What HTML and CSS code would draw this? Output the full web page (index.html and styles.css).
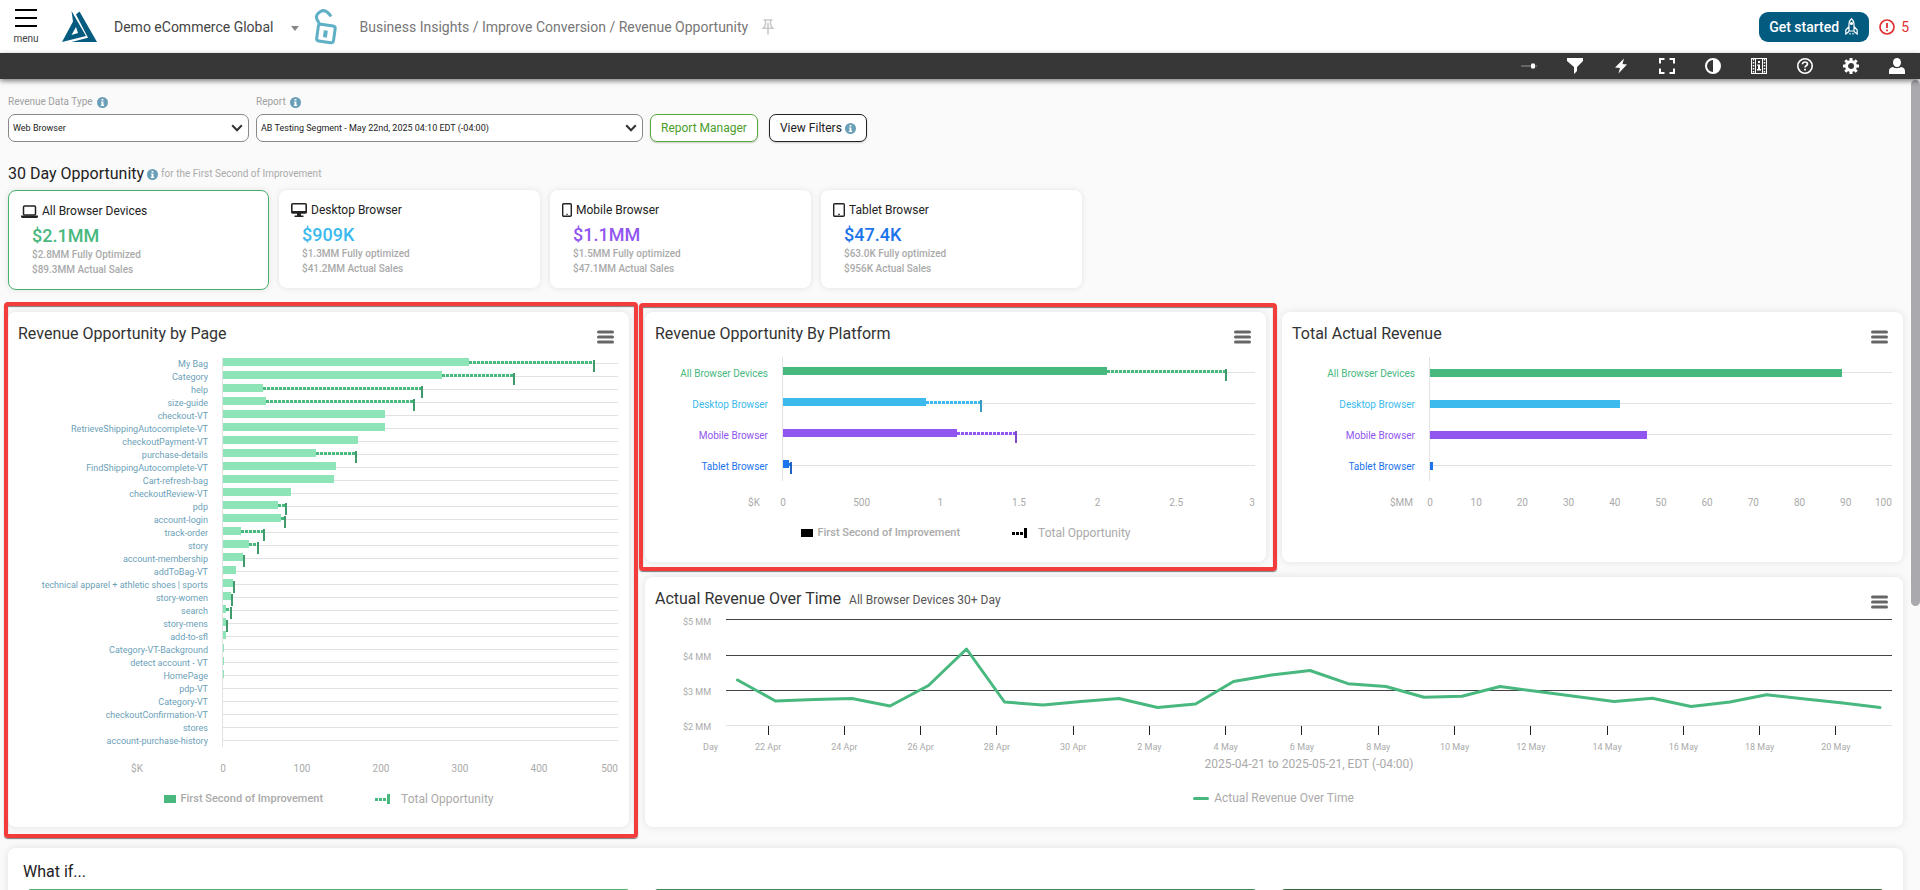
FILE: index.html
```html
<!DOCTYPE html>
<html lang="en">
<head>
  <meta charset="UTF-8">
  <meta name="viewport" content="width=device-width, initial-scale=1.0">
  <title>Revenue Opportunity</title>
  <link rel="stylesheet" href="styles.css">
</head>
<body>
  <!-- shared icons -->
  <svg class="sprite" aria-hidden="true">
    <symbol id="info" viewBox="0 0 12 12">
      <circle cx="6" cy="6" r="6" fill="#6a9fb8"/>
      <path d="M5 2.2h2v1.7H5zM4.3 4.9H7v3.6h.8v1.2H4.2V8.5H5V6.1h-.7z" fill="#fff"/>
    </symbol>
    <symbol id="chevron" viewBox="0 0 12 8">
      <path d="M1.2 1.2 6 6.2l4.8-5" fill="none" stroke="#333" stroke-width="2"/>
    </symbol>
    <symbol id="burger" viewBox="0 0 17 14">
      <path d="M1.5 2h14M1.5 7h14M1.5 12h14" stroke="#666" stroke-width="3" stroke-linecap="round"/>
    </symbol>
    <symbol id="whisker" viewBox="0 0 15 10">
      <path d="M0 4h3v3H0zM4 4h3v3H4zM8 4h3v3H8zM12 0h3v10h-3z" fill="currentColor"/>
    </symbol>
  </svg>

  <header class="topbar">
    <button class="menu-btn" type="button">
      <svg width="22" height="18" viewBox="0 0 22 18"><path d="M0 1h22M0 9h22M0 17h22" stroke="#000" stroke-width="2"/></svg>
      <span>menu</span>
    </button>
    <a class="logo" href="#" aria-label="Home">
      <svg width="35" height="32" viewBox="0 0 35 32">
        <path d="M17.500 .5 35 31H9.500L26 26.700 14 3.500z" fill="#045b80"/>
        <path d="M9.500 0 24 25 0 31 11 10.500zM14 16 9.500 24l6.500-2z" fill="#045b80" fill-rule="evenodd"/>
      </svg>
    </a>
    <button class="account" type="button">Demo eCommerce Global <span class="caret"></span></button>
    <svg class="lock" width="24" height="38" viewBox="0 0 24 38" fill="none" stroke="#5fb0c6" stroke-width="3">
      <rect x="3.500" y="17" width="17" height="17" rx="2.500" transform="rotate(8 12 25)"/>
      <path d="M6 17 2.800 11C1.500 7.500 4 5 6.500 3.500c3.500-2 7-.5 10.500 5"/>
      <rect x="10.500" y="23.500" width="2" height="5" stroke-width="2" transform="rotate(8 12 25)"/>
    </svg>
    <nav class="crumbs">Business Insights / Improve Conversion / Revenue Opportunity</nav>
    <svg class="pin" width="12" height="16" viewBox="0 0 12 16" fill="none" stroke="#c8c8c8" stroke-width="1.500"><path d="M1.500 1h9M3.500 1v5L1 9.300h10L8.500 6V1M6 4v11.500"/></svg>
    <div class="topbar-right">
      <button class="start-btn" type="button">Get started
        <svg width="13" height="17" viewBox="0 0 13 17" fill="none" stroke="#fff" stroke-width="1.200"><path d="M4 13V6c0-2.500 1-4 2.500-5.200C8 2 9 3.500 9 6v7zM4 8.500.8 12v4L4 13.500M9 8.500l3.200 3.500v4L9 13.500"/><circle cx="6.500" cy="5.500" r="1" fill="#fff"/><path d="M5 15v1.500M8 15v1.500"/></svg>
      </button>
      <button class="alert-btn" type="button">
        <svg width="16" height="16" viewBox="0 0 16 16"><circle cx="8" cy="8" r="7" fill="none" stroke="#e03131" stroke-width="1.700"/><path d="M8 4v5M8 10.500v1.800" stroke="#e03131" stroke-width="1.800"/></svg>
        5
      </button>
    </div>
  </header>

  <nav class="toolbar">
    <button type="button" aria-label="Slider"><svg viewBox="0 0 16 16"><path d="M0 8h16" stroke="#777" stroke-width="1.500"/><rect x="10" y="5.500" width="4" height="5" rx="1" fill="#fff"/></svg></button>
    <button type="button" aria-label="Filter"><svg viewBox="0 0 16 16"><path d="M0 0h16v3l-6 6v4l-3 3V9L0 3z" fill="#fff"/></svg></button>
    <button type="button" aria-label="Events"><svg viewBox="0 0 16 16"><path d="M11 .5 2 9.500l5 .5-1.500 5.500L14 6.500 9.500 6z" fill="#fff"/></svg></button>
    <button type="button" aria-label="Full screen"><svg viewBox="0 0 16 16"><path d="M1 5.500V1h4.500M10.500 1H15v4.500M15 10.500V15h-4.500M5.500 15H1v-4.500" fill="none" stroke="#fff" stroke-width="2"/></svg></button>
    <button type="button" aria-label="Contrast"><svg viewBox="0 0 16 16"><circle cx="8" cy="8" r="7" fill="none" stroke="#fff" stroke-width="2"/><path d="M8 1a7 7 0 0 1 0 14z" fill="#fff"/></svg></button>
    <button type="button" aria-label="Film"><svg viewBox="0 0 16 16"><rect x=".5" y=".5" width="15" height="15" fill="none" stroke="#fff"/><path d="M2.500 1v14M13.500 1v14" stroke="#fff" stroke-width="1.500" stroke-dasharray="1.500 1.500"/><path d="M4.500 0v16M11.500 0v16" stroke="#fff"/><path d="M7 3h2v2H7zM6.300 6.500H9V11h1v1.500H6V11h1V8h-.7z" fill="#fff"/></svg></button>
    <button type="button" aria-label="Help"><svg viewBox="0 0 16 16" fill="none" stroke="#fff"><circle cx="8" cy="8" r="7.200" stroke-width="1.600"/><path d="M5.500 6.300C5.500 4.800 6.600 4 8 4s2.500.8 2.500 2.100C10.500 7.800 8 7.800 8 9.500M8 10.800v1.700" stroke-width="1.700"/></svg></button>
    <button type="button" aria-label="Settings"><svg viewBox="0 0 16 16" fill="none" stroke="#fff"><circle cx="8" cy="8" r="4.500" stroke-width="3"/><path d="M8 0v3M8 13v3M0 8h3M13 8h3M2.300 2.300l2 2M11.700 11.700l2 2M13.700 2.300l-2 2M4.300 11.700l-2 2" stroke-width="3"/></svg></button>
    <button type="button" aria-label="Profile"><svg viewBox="0 0 16 16" fill="#fff"><ellipse cx="8" cy="4.500" rx="4" ry="4.500"/><path d="M0 16v-3c0-2.500 1.500-3.500 4-4 2 1.600 6 1.600 8 0 2.500.5 4 1.500 4 4v3z"/></svg></button>
  </nav>

  <main class="page">
    <div class="scroll-thumb"></div>

    <section class="filters">
      <div class="field field-type">
        <label for="data-type">Revenue Data Type <svg class="info"><use href="#info"/></svg></label>
        <div class="select-wrap">
          <select id="data-type"><option>Web Browser</option></select>
          <svg class="chevron"><use href="#chevron"/></svg>
        </div>
      </div>
      <div class="field field-report">
        <label for="report">Report <svg class="info"><use href="#info"/></svg></label>
        <div class="select-wrap">
          <select id="report"><option>AB Testing Segment - May 22nd, 2025 04:10 EDT (-04:00)</option></select>
          <svg class="chevron"><use href="#chevron"/></svg>
        </div>
      </div>
      <button class="btn btn-green" type="button">Report Manager</button>
      <button class="btn" type="button">View Filters <svg class="info"><use href="#info"/></svg></button>
    </section>

    <h2 class="section-title">30 Day Opportunity <svg class="info"><use href="#info"/></svg> <small>for the First Second of Improvement</small></h2>

    <section class="devices">
      <article class="device selected">
        <h3><svg width="17" height="13" viewBox="0 0 17 13"><rect x="2.500" y="1" width="12" height="9" rx="1" fill="none" stroke="#222" stroke-width="1.500"/><path d="M0 10.500h17v1.500l-1 1H1l-1-1z" fill="#222"/></svg>All Browser Devices</h3>
        <p class="amount green">$2.1MM</p>
        <p>$2.8MM Fully Optimized</p>
        <p>$89.3MM Actual Sales</p>
      </article>
      <article class="device">
        <h3><svg width="16" height="14" viewBox="0 0 16 14"><rect x=".8" y=".8" width="14.400" height="9" rx="1" fill="none" stroke="#222" stroke-width="1.600"/><path d="M.5 8h15v2.500H.5zM6 10h4v2.500h2.500V14h-9v-1.500H6z" fill="#222"/></svg>Desktop Browser</h3>
        <p class="amount blue">$909K</p>
        <p>$1.3MM Fully optimized</p>
        <p>$41.2MM Actual Sales</p>
      </article>
      <article class="device">
        <h3><svg width="10" height="14" viewBox="0 0 10 14"><rect x=".7" y=".7" width="8.600" height="12.600" rx="1" fill="none" stroke="#222" stroke-width="1.400"/><path d="M4.200 11.300h1.600" stroke="#222"/></svg>Mobile Browser</h3>
        <p class="amount purple">$1.1MM</p>
        <p>$1.5MM Fully optimized</p>
        <p>$47.1MM Actual Sales</p>
      </article>
      <article class="device">
        <h3><svg width="12" height="14" viewBox="0 0 12 14"><rect x=".7" y=".7" width="10.600" height="12.600" rx="1" fill="none" stroke="#222" stroke-width="1.400"/><path d="M5 11.300h2" stroke="#222"/></svg>Tablet Browser</h3>
        <p class="amount royal">$47.4K</p>
        <p>$63.0K Fully optimized</p>
        <p>$956K Actual Sales</p>
      </article>
    </section>

    <section class="charts">
      <article class="card by-page outlined">
        <div class="card-head"><h2>Revenue Opportunity by Page</h2><button type="button" aria-label="Chart menu"><svg><use href="#burger"/></svg></button></div>
        <div class="rows rows-page">
          <div class="row"><span>My Bag</span><i class="bar" style="width:62.4%"></i><i class="dots" style="width:31.6%"></i></div>
          <div class="row"><span>Category</span><i class="bar" style="width:55.5%"></i><i class="dots" style="width:18.2%"></i></div>
          <div class="row"><span>help</span><i class="bar" style="width:10%"></i><i class="dots" style="width:40.4%"></i></div>
          <div class="row"><span>size-guide</span><i class="bar" style="width:11%"></i><i class="dots" style="width:37.4%"></i></div>
          <div class="row"><span>checkout-VT</span><i class="bar" style="width:41.1%"></i></div>
          <div class="row"><span>RetrieveShippingAutocomplete-VT</span><i class="bar" style="width:40.9%"></i></div>
          <div class="row"><span>checkoutPayment-VT</span><i class="bar" style="width:34.1%"></i></div>
          <div class="row"><span>purchase-details</span><i class="bar" style="width:23.6%"></i><i class="dots" style="width:10%"></i></div>
          <div class="row"><span>FindShippingAutocomplete-VT</span><i class="bar" style="width:28.5%"></i></div>
          <div class="row"><span>Cart-refresh-bag</span><i class="bar" style="width:28%"></i></div>
          <div class="row"><span>checkoutReview-VT</span><i class="bar" style="width:17.3%"></i></div>
          <div class="row"><span>pdp</span><i class="bar" style="width:14%"></i><i class="dots" style="width:2%"></i></div>
          <div class="row"><span>account-login</span><i class="bar" style="width:14.8%"></i><i class="dots" style="width:0.9%"></i></div>
          <div class="row"><span>track-order</span><i class="bar" style="width:4.6%"></i><i class="dots" style="width:5.7%"></i></div>
          <div class="row"><span>story</span><i class="bar" style="width:6.7%"></i><i class="dots" style="width:2.2%"></i></div>
          <div class="row"><span>account-membership</span><i class="bar" style="width:5%"></i><i class="dots" style="width:0.4%"></i></div>
          <div class="row"><span>addToBag-VT</span><i class="bar" style="width:3.4%"></i></div>
          <div class="row"><span>technical apparel + athletic shoes | sports</span><i class="bar" style="width:2.6%"></i><i class="dots" style="width:0.3%"></i></div>
          <div class="row"><span>story-women</span><i class="bar" style="width:1.9%"></i><i class="dots" style="width:0.4%"></i></div>
          <div class="row"><span>search</span><i class="bar" style="width:0.8%"></i><i class="dots" style="width:1.3%"></i></div>
          <div class="row"><span>story-mens</span><i class="bar" style="width:0.8%"></i><i class="dots" style="width:0.3%"></i></div>
          <div class="row"><span>add-to-sfl</span><i class="bar" style="width:0.8%"></i></div>
          <div class="row"><span>Category-VT-Background</span><i class="bar" style="width:0.3%"></i></div>
          <div class="row"><span>detect account - VT</span><i class="bar" style="width:0.3%"></i></div>
          <div class="row"><span>HomePage</span><i class="bar" style="width:0.3%"></i></div>
          <div class="row"><span>pdp-VT</span></div>
          <div class="row"><span>Category-VT</span></div>
          <div class="row"><span>checkoutConfirmation-VT</span></div>
          <div class="row"><span>stores</span></div>
          <div class="row"><span>account-purchase-history</span></div>
        </div>
        <div class="axis"><b>$K</b><span>0</span><span>100</span><span>200</span><span>300</span><span>400</span><span>500</span></div>
        <div class="legend legend-green">
          <span class="first"><i></i>First Second of Improvement</span>
          <span><svg><use href="#whisker"/></svg>Total Opportunity</span>
        </div>
      </article>

      <article class="card by-platform outlined">
        <div class="card-head"><h2>Revenue Opportunity By Platform</h2><button type="button" aria-label="Chart menu"><svg><use href="#burger"/></svg></button></div>
        <div class="rows">
          <div class="row green"><span>All Browser Devices</span><i class="bar" style="width:68.7%"></i><i class="dots" style="width:25.2%"></i></div>
          <div class="row blue"><span>Desktop Browser</span><i class="bar" style="width:30.2%"></i><i class="dots" style="width:11.7%"></i></div>
          <div class="row purple"><span>Mobile Browser</span><i class="bar" style="width:36.9%"></i><i class="dots" style="width:12.5%"></i></div>
          <div class="row royal"><span>Tablet Browser</span><i class="bar" style="width:1.3%"></i><i class="dots" style="width:0.4%"></i></div>
        </div>
        <div class="axis"><b>$K</b><span>0</span><span>500</span><span>1</span><span>1.5</span><span>2</span><span>2.5</span><span>3</span></div>
        <div class="legend">
          <span class="first"><i></i>First Second of Improvement</span>
          <span><svg><use href="#whisker"/></svg>Total Opportunity</span>
        </div>
      </article>

      <article class="card total">
        <div class="card-head"><h2>Total Actual Revenue</h2><button type="button" aria-label="Chart menu"><svg><use href="#burger"/></svg></button></div>
        <div class="rows">
          <div class="row green"><span>All Browser Devices</span><i class="bar" style="width:89.2%"></i></div>
          <div class="row blue"><span>Desktop Browser</span><i class="bar" style="width:41.2%"></i></div>
          <div class="row purple"><span>Mobile Browser</span><i class="bar" style="width:47%"></i></div>
          <div class="row royal"><span>Tablet Browser</span><i class="bar" style="width:0.7%"></i></div>
        </div>
        <div class="axis"><b>$MM</b><span>0</span><span>10</span><span>20</span><span>30</span><span>40</span><span>50</span><span>60</span><span>70</span><span>80</span><span>90</span><span>100</span></div>
      </article>

      <article class="card over-time">
        <div class="card-head"><h2>Actual Revenue Over Time <small>All Browser Devices 30+ Day</small></h2><button type="button" aria-label="Chart menu"><svg><use href="#burger"/></svg></button></div>
        <div class="line-chart">
          <div class="y-axis"><span>$5 MM</span><span>$4 MM</span><span>$3 MM</span><span>$2 MM</span></div>
          <svg class="plot" viewBox="0 0 1166 108" preserveAspectRatio="none" fill="none">
            <path d="M0 1.500h1166M0 37.500h1166M0 72.500h1166" stroke="#444"/>
            <path d="M0 107.500h1166" stroke="#e2e2e2"/>
            <polyline points="11.500,62 49.500,83 88,81.500 126,80.500 164,88 202.500,67.500 240.500,31 278.500,84 317,87 355,83.500 393,80.500 431.500,89.500 469.500,86 507.500,63.500 545.500,57 584,52.500 622,65.700 660,68.500 698,79.300 736,78.300 774,68.500 812,73.500 850,78.500 888,83.500 926.500,80.300 965,88.500 1004,84 1040.500,76.700 1079,81 1117,85 1154,89.500" stroke="#48b87e" stroke-width="3" stroke-linejoin="round" stroke-linecap="round"/>
          </svg>
          <span class="day">Day</span>
          <div class="x-axis"><span>22 Apr</span><span>24 Apr</span><span>26 Apr</span><span>28 Apr</span><span>30 Apr</span><span>2 May</span><span>4 May</span><span>6 May</span><span>8 May</span><span>10 May</span><span>12 May</span><span>14 May</span><span>16 May</span><span>18 May</span><span>20 May</span></div>
          <p class="range">2025-04-21 to 2025-05-21, EDT (-04:00)</p>
          <p class="line-legend"><i></i>Actual Revenue Over Time</p>
        </div>
      </article>
    </section>

    <section class="card what-if">
      <h2>What if...</h2>
      <div class="scenarios"><div></div><div></div><div></div></div>
    </section>
  </main>
</body>
</html>
```
FILE: styles.css
```css
* {
  box-sizing: border-box;
}
body {
  margin: 0;
  height: 100vh;
  display: flex;
  flex-direction: column;
  overflow: hidden;
  font-family: Roboto, "Liberation Sans", sans-serif;
  background: #fafafa;
  color: #222;
}
h2, h3, p {
  margin: 0;
  font-weight: 400;
}
button {
  font-family: inherit;
  background: none;
  border: none;
  padding: 0;
  cursor: pointer;
}
.sprite {
  display: none;
}

/* top bar */
.topbar {
  display: flex;
  align-items: center;
  flex: none;
  height: 53px;
  padding: 0 11px 0 14px;
  background: #fff;
}
.menu-btn {
  display: flex;
  flex-direction: column;
  align-items: center;
  gap: 6px;
  width: 24px;
  font-size: 10px;
  line-height: 12px;
  color: #444;
}
.logo {
  display: flex;
  margin-left: 24px;
}
.account {
  display: flex;
  align-items: center;
  gap: 17px;
  margin-left: 17px;
  font-size: 14px;
  color: #444;
}
.caret {
  margin-top: 4px;
  border: 4px solid transparent;
  border-top: 5px solid #888;
  border-bottom: 0;
}
.lock {
  margin-left: 15px;
}
.crumbs {
  margin-left: 22px;
  font-size: 14px;
  color: #777;
}
.pin {
  margin-left: 14px;
}
.topbar-right {
  display: flex;
  gap: 10px;
  margin-left: auto;
}
.start-btn {
  display: flex;
  align-items: center;
  gap: 6px;
  height: 30px;
  padding: 0 11px 0 10px;
  border-radius: 9px;
  background: #045b80;
  color: #fff;
  font-size: 14px;
  font-weight: 500;
}
.alert-btn {
  display: flex;
  align-items: center;
  gap: 6px;
  font-size: 14px;
  color: #e03131;
}

/* dark toolbar */
.toolbar {
  display: flex;
  justify-content: flex-end;
  gap: 30px;
  flex: none;
  height: 26px;
  padding: 0 15px;
  background: #373737;
  box-shadow: 0 2px 5px rgba(0, 0, 0, 0.5);
  z-index: 1;
}
.toolbar svg {
  display: block;
  width: 16px;
  height: 16px;
}

.page {
  position: relative;
  flex: 1;
  overflow: hidden;
  padding: 16px 17px 0 8px;
}
.scroll-thumb {
  position: absolute;
  top: 1px;
  right: 0;
  width: 9px;
  height: 526px;
  border-radius: 5px;
  background: #a9a9ae;
}
.info {
  width: 11px;
  height: 11px;
}

/* filters */
.filters {
  display: flex;
  align-items: flex-end;
  gap: 7px;
}
.field-type {
  width: 241px;
}
.field-report {
  width: 387px;
}
.field label {
  display: flex;
  align-items: center;
  gap: 4px;
  margin-bottom: 5px;
  font-size: 10px;
  line-height: 14px;
  color: #a0a0a0;
}
.select-wrap {
  position: relative;
}
.select-wrap select {
  width: 100%;
  height: 28px;
  padding: 0 24px 0 4px;
  appearance: none;
  border: 1px solid #888;
  border-radius: 7px;
  background: #fff;
  color: #222;
  font: 400 9px Roboto, sans-serif;
}
.chevron {
  position: absolute;
  right: 6px;
  top: 10px;
  width: 12px;
  height: 8px;
  pointer-events: none;
}
.btn {
  display: flex;
  align-items: center;
  gap: 3px;
  height: 28px;
  padding: 0 10px;
  border: 1px solid #222;
  border-radius: 7px;
  background: #fff;
  box-shadow: 0 1px 2px rgba(0, 0, 0, 0.2);
  font-size: 12px;
  color: #222;
}
.btn-green {
  margin-right: 4px;
  border-color: #5aaa3a;
  color: #4b9c2d;
}

/* 30 day opportunity */
.section-title {
  display: flex;
  align-items: center;
  gap: 3px;
  margin-top: 21px;
  font-size: 16px;
  line-height: 22px;
}
.section-title small {
  font-size: 10px;
  color: #aaa;
}
.devices {
  display: flex;
  align-items: flex-start;
  gap: 10px;
  height: 127px;
  padding-top: 5px;
}
.device {
  width: 261px;
  padding: 12px;
  border-radius: 8px;
  background: #fff;
  box-shadow: 0 0 6px rgba(0, 0, 0, 0.1);
  height: 98px;
}
.device.selected {
  height: 100px;
  border: 1px solid #45b26b;
}
.device h3 {
  display: flex;
  align-items: center;
  gap: 4px;
  height: 16px;
  font-size: 12px;
}
.device p {
  margin-left: 11px;
  font-size: 10px;
  font-weight: 500;
  line-height: 15px;
  color: #aaa;
}
.device .amount {
  font-size: 18px;
  line-height: 22px;
  padding-top: 6px;
  color: var(--series);
}
.green { --series: #48b87e; }
.blue { --series: #3cbaed; }
.purple { --series: #9155f0; }
.royal { --series: #1c74ec; }

/* chart cards */
.card {
  position: relative;
  border-radius: 8px;
  background: #fff;
  box-shadow: 0 0 8px rgba(0, 0, 0, 0.1);
}
.charts {
  display: grid;
  grid-template-columns: repeat(3, minmax(0, 1fr));
  grid-template-rows: 250px 250px;
  gap: 15px 16px;
}
.by-page {
  grid-row: span 2;
}
.over-time {
  grid-column: span 2;
}
.outlined::after {
  content: "";
  position: absolute;
  inset: -9px -11px -9px -6px;
  border: 4px solid #f33c3c;
  border-radius: 4px;
  box-shadow: 0 1px 1px rgba(0, 0, 0, 0.5), inset 0 1px 1px rgba(0, 0, 0, 0.5);
  pointer-events: none;
}
.by-page.outlined::after {
  inset: -10px -9px -11px -4px;
}
.card-head {
  display: flex;
  justify-content: space-between;
  align-items: center;
  height: 45px;
  padding: 0 15px 0 10px;
}
.card-head h2 {
  padding-bottom: 3px;
  font-size: 16px;
  color: #333;
}
.card-head small {
  margin-left: 4px;
  font-size: 12px;
  color: #555;
}
.card-head svg {
  display: block;
  width: 17px;
  height: 14px;
  margin-top: 4px;
}
.rows {
  --row: 31px;
  --label: 10px;
  margin: 0 11px 0 137px;
  border-left: 1px solid #e2e2e2;
}
.total .rows {
  margin-left: 147px;
}
.rows-page {
  --row: 13px;
  --label: 9px;
  --series: #8de4b6;
  margin-left: 214px;
}
.row {
  position: relative;
  display: flex;
  align-items: center;
  height: var(--row);
  background: linear-gradient(#e2e2e2, #e2e2e2) center / 100% 1px no-repeat;
}
.row span {
  position: absolute;
  right: 100%;
  margin-right: 15px;
  padding-top: 2px;
  font-size: var(--label);
  line-height: 13px;
  white-space: nowrap;
  color: var(--series);
}
.rows-page .row span {
  color: #6c9fb8;
}
.bar {
  height: 8px;
  margin-bottom: 3px;
  background: var(--series);
}
.total .bar {
  margin-bottom: 0;
}
/* dotted extension with its end cap */
.dots {
  position: relative;
  height: 3px;
  margin-bottom: 3px;
  background: repeating-linear-gradient(90deg, var(--dot, var(--series)) 0 3px, transparent 3px 4px);
}
.rows-page .dots {
  --dot: #48b87e;
}
.dots::after {
  content: "";
  position: absolute;
  right: -1px;
  top: -1px;
  width: 2px;
  height: 12px;
  background: color-mix(in srgb, var(--dot, var(--series)) 80%, #222);
}
.axis {
  position: relative;
  display: flex;
  justify-content: space-between;
  margin: 14px 11px 0 138px;
  font-size: 10px;
  line-height: 16px;
  color: #aaa;
}
.axis b {
  position: absolute;
  right: 100%;
  margin-right: 23px;
  font-weight: 400;
}
.total .axis {
  margin-left: 148px;
}
.total .axis b {
  margin-right: 17px;
}
.by-page .axis {
  margin-left: 215px;
}
.by-page .axis b {
  margin-right: 80px;
}
.axis span {
  display: flex;
  justify-content: center;
  width: 0;
}
.axis span:last-child {
  justify-content: flex-end;
}
.legend {
  display: flex;
  justify-content: center;
  gap: 52px;
  margin-top: 14px;
  padding-left: 20px;
  font-size: 12px;
  line-height: 16px;
  color: #aaa;
}
.legend span {
  display: flex;
  align-items: center;
  gap: 11px;
}
.legend .first {
  gap: 5px;
  font-size: 11px;
  font-weight: 500;
}
.legend i {
  width: 12px;
  height: 8px;
  background: #000;
}
.legend svg {
  width: 15px;
  height: 10px;
  color: #000;
}
.legend-green i {
  background: #48b87e;
}
.legend-green svg {
  color: #48b87e;
}

/* line chart */
.line-chart {
  display: grid;
  grid-template-columns: 71px 1fr;
  margin: -4px 11px 0 0;
  padding-left: 10px;
  font-size: 9px;
  color: #aaa;
}
.y-axis {
  display: flex;
  flex-direction: column;
  justify-content: space-between;
  height: 117px;
  margin: -2px 15px -7px 0;
  line-height: 12px;
  text-align: right;
}
.plot {
  width: 100%;
  height: 108px;
  overflow: visible;
}
.day {
  padding: 15px 8px 0 0;
  line-height: 12px;
  text-align: right;
}
.x-axis {
  display: flex;
  padding: 0 18px 0 4px;
  line-height: 12px;
}
.x-axis span {
  flex: 1;
  text-align: center;
}
.x-axis span::before {
  content: "";
  display: block;
  width: 1px;
  height: 9px;
  margin: 0 auto 6px;
  background: #222;
}
.range {
  grid-column: 2;
  margin-top: 3px;
  font-size: 12px;
  line-height: 16px;
  text-align: center;
}
.line-legend {
  grid-column: 1 / -1;
  display: flex;
  justify-content: center;
  align-items: center;
  gap: 5px;
  margin-top: 18px;
  font-size: 12px;
  line-height: 16px;
}
.line-legend i {
  width: 16px;
  height: 3px;
  border-radius: 2px;
  background: #48b87e;
}

/* what if */
.what-if {
  margin-top: 21px;
  padding: 12px 20px;
}
.what-if h2 {
  margin-left: -5px;
  font-size: 16px;
  line-height: 24px;
}
.scenarios {
  display: grid;
  grid-template-columns: repeat(3, 1fr);
  gap: 26px;
  margin-top: 5px;
}
.scenarios div {
  height: 120px;
  border-radius: 3px;
  background: #4eb36c;
}
.scenarios div:nth-child(2) {
  background: #3f8b55;
}
.scenarios div:nth-child(3) {
  background: #37693f;
}
```
